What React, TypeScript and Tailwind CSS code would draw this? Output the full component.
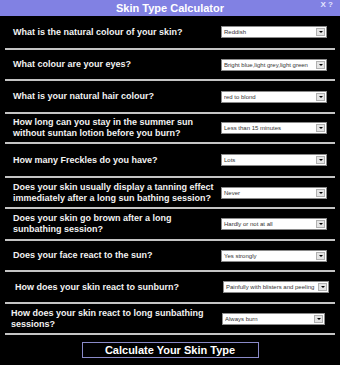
import React from "react";

type Row = {
  q: string[];
  a: string;
  h: string;
  pl?: string;
  pr?: string;
  w?: string;
};

const rows: Row[] = [
  { q: ["What is the natural colour of your skin?"], a: "Reddish", h: "h-[34px]" },
  { q: ["What colour are your eyes?"], a: "Bright blue,light grey,light green", h: "h-[31px]" },
  { q: ["What is your natural hair colour?"], a: "red to blond", h: "h-[33px]" },
  {
    q: ["How long can you stay in the summer sun", "without suntan lotion before you burn?"],
    a: "Less than 15 minutes",
    h: "h-[30px]",
  },
  { q: ["How many Freckles do you have?"], a: "Lots", h: "h-[34px]" },
  {
    q: ["Does your skin usually display a tanning effect", "immediately after a long sun bathing session?"],
    a: "Never",
    h: "h-[31px]",
  },
  { q: ["Does your skin go brown after a long", "sunbathing session?"], a: "Hardly or not at all", h: "h-[32px]" },
  { q: ["Does your face react to the sun?"], a: "Yes strongly", h: "h-[31px]" },
  {
    q: ["How does your skin react to sunburn?"],
    a: "Painfully with blisters and peeling",
    h: "h-[32px]",
    pl: "pl-[10px]",
    pr: "pr-[6px]",
  },
  {
    q: ["How does your skin react to long sunbathing", "sessions?"],
    a: "Always burn",
    h: "h-[31px]",
    pl: "pl-[6px]",
    pr: "pr-[10px]",
    w: "w-[103px]",
  },
];

function Dropdown({ value, w }: { value: string; w?: string }) {
  return (
    <div
      className={`flex h-[12px] shrink-0 items-center border border-[#8a8a8a] bg-white pl-[2px] pr-[1px] ${w ?? "w-[106px]"}`}
    >
      <span className="flex-1 overflow-hidden whitespace-nowrap text-[6px] leading-none text-[#333]">{value}</span>
      <div className="flex h-[8px] w-[9px] shrink-0 items-center justify-center border border-[#b0b0b0] bg-[#e4e4e4]">
        <div className="h-0 w-0 border-x-[2px] border-t-[2px] border-x-transparent border-t-black" />
      </div>
    </div>
  );
}

export default function App() {
  return (
    <div className="h-[365px] w-[340px] overflow-hidden bg-black font-['Liberation_Sans',Arial,sans-serif]">
      {/* title bar */}
      <div className="relative flex h-[16px] items-center justify-center bg-[#8181e3]">
        <span className="text-[11px] font-bold leading-none text-white">Skin Type Calculator</span>
        <span className="absolute right-[7px] top-[1px] text-[8px] font-bold leading-none text-[#e4e4ff]">X ?</span>
      </div>

      <div className="mx-[5px]">
        {rows.map((r, i) => (
          <div
            key={i}
            className={`flex items-center justify-between border-b-2 border-[#c4c4c4] ${r.h} ${r.pl ?? "pl-[8px]"} ${r.pr ?? "pr-[8px]"}`}
          >
            <div className="text-[9px] font-bold leading-[11px] text-[#f2f2f2]">
              {r.q.map((line, j) => (
                <div key={j}>{line}</div>
              ))}
            </div>
            <Dropdown value={r.a} w={r.w} />
          </div>
        ))}
      </div>

      <div className="mt-[7px] flex justify-center">
        <div className="flex h-[16px] w-[177px] items-center justify-center border border-[#8a8ac8] bg-black">
          <span className="text-[11px] font-bold leading-none text-white">Calculate Your Skin Type</span>
        </div>
      </div>
    </div>
  );
}
